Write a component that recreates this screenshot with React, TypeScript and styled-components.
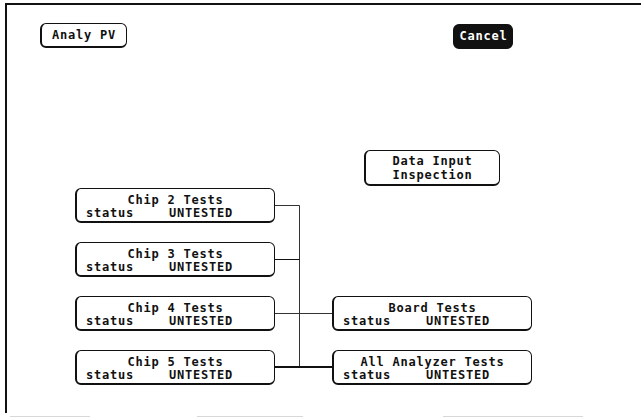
import styled, { createGlobalStyle } from "styled-components";

const GlobalStyle = createGlobalStyle`
  html, body {
    margin: 0;
    padding: 0;
    background: #ffffff;
    overflow: hidden;
  }

  body {
    font-family: "DejaVu Sans Mono", "Liberation Mono", monospace;
    font-size: 12px;
    letter-spacing: 0.78px;
    color: #111111;
  }
`;

const Screen = styled.div`
  width: 641px;
  height: 418px;
  overflow: hidden;
  display: flex;
  flex-direction: column;
`;

const Frame = styled.div`
  box-sizing: border-box;
  height: 410px;
  margin: 3px 0 0 5px;
  padding: 18px 0 0 33px;
  border-top: 2px solid #111111;
  border-left: 2px solid #111111;
  display: flex;
  flex-direction: column;
`;

const Header = styled.div`
  display: flex;
  align-items: flex-start;
  gap: 326px;
`;

const SoftKey = styled.div<{ $width: number; $active?: boolean }>`
  box-sizing: border-box;
  width: ${(p) => p.$width}px;
  height: 25px;
  padding-top: 4px;
  margin-top: ${(p) => (p.$active ? 1 : 0)}px;
  border: 1px solid #111111;
  border-left-width: 2px;
  border-bottom-width: 2px;
  border-radius: 6px;
  background: ${(p) => (p.$active ? "#111111" : "#ffffff")};
  color: ${(p) => (p.$active ? "#ffffff" : "#111111")};
  font-weight: ${(p) => (p.$active ? 700 : 600)};
  line-height: 14px;
  text-align: center;
  white-space: pre;
`;

const InspectRow = styled.div`
  display: flex;
  margin-top: 101px;
  padding-left: 324px;
`;

const InspectBox = styled.div`
  box-sizing: border-box;
  width: 136px;
  height: 36px;
  padding-top: 3px;
  border: 1px solid #111111;
  border-left-width: 2px;
  border-bottom-width: 2px;
  border-radius: 6px;
  font-weight: 600;
  line-height: 14px;
  text-align: center;
`;

const Tree = styled.div`
  display: grid;
  grid-template-columns: 200px 57px 200px;
  grid-template-rows: repeat(4, 35px);
  row-gap: 19px;
  margin: 2px 0 0 35px;
`;

const Node = styled.div<{ $col: number; $row: number }>`
  grid-column: ${(p) => p.$col};
  grid-row: ${(p) => p.$row};
  box-sizing: border-box;
  height: 35px;
  padding-top: 5px;
  border: 1px solid #111111;
  border-left-width: 2px;
  border-bottom-width: 2px;
  border-radius: 6px;
  background: #ffffff;
  font-weight: 600;
  line-height: 13px;
`;

const NodeTitle = styled.div`
  text-align: center;
  white-space: pre;
`;

const StatusRow = styled.div`
  display: flex;
  padding-left: 9px;
`;

const StatusLabel = styled.span`
  width: 83px;
`;

const Connector = styled.svg`
  grid-column: 2;
  grid-row: 1 / 5;
  display: block;
`;

const Footer = styled.div`
  display: flex;
  margin-top: 3px;
  height: 2px;
`;

const FooterSeg = styled.div<{ $left: number; $width: number }>`
  margin-left: ${(p) => p.$left}px;
  width: ${(p) => p.$width}px;
  height: 1px;
  background: #d8d8d8;
`;

type TestNode = { title: string; col: number; row: number };

const nodes: TestNode[] = [
  { title: "Chip 2 Tests", col: 1, row: 1 },
  { title: "Chip 3 Tests", col: 1, row: 2 },
  { title: "Chip 4 Tests", col: 1, row: 3 },
  { title: "Chip 5 Tests", col: 1, row: 4 },
  { title: "Board Tests", col: 3, row: 3 },
  { title: "All Analyzer Tests", col: 3, row: 4 },
];

export default function App() {
  return (
    <>
      <GlobalStyle />
      <Screen>
        <Frame>
          <Header>
            <SoftKey $width={87}>Analy PV</SoftKey>
            <SoftKey $width={60} $active>
              Cancel
            </SoftKey>
          </Header>

          <InspectRow>
            <InspectBox>
              <div>Data Input</div>
              <div>Inspection</div>
            </InspectBox>
          </InspectRow>

          <Tree>
            {nodes.map((n) => (
              <Node key={n.title} $col={n.col} $row={n.row}>
                <NodeTitle>{n.title}</NodeTitle>
                <StatusRow>
                  <StatusLabel>status</StatusLabel>
                  <span>UNTESTED</span>
                </StatusRow>
              </Node>
            ))}
            <Connector width="57" height="197" viewBox="0 0 57 197">
              <g stroke="#333333" strokeWidth="1" fill="none">
                <path d="M0 17.5 H24.5" />
                <path d="M24.5 17.5 V180" />
                <path d="M0 71.5 H24.5" stroke="#111111" />
                <path d="M0 125.5 H57" />
              </g>
              <path d="M0 179 H57" stroke="#111111" strokeWidth="2" />
            </Connector>
          </Tree>
        </Frame>
        <Footer>
          <FooterSeg $left={10} $width={80} />
          <FooterSeg $left={107} $width={106} />
          <FooterSeg $left={140} $width={140} />
        </Footer>
      </Screen>
    </>
  );
}
